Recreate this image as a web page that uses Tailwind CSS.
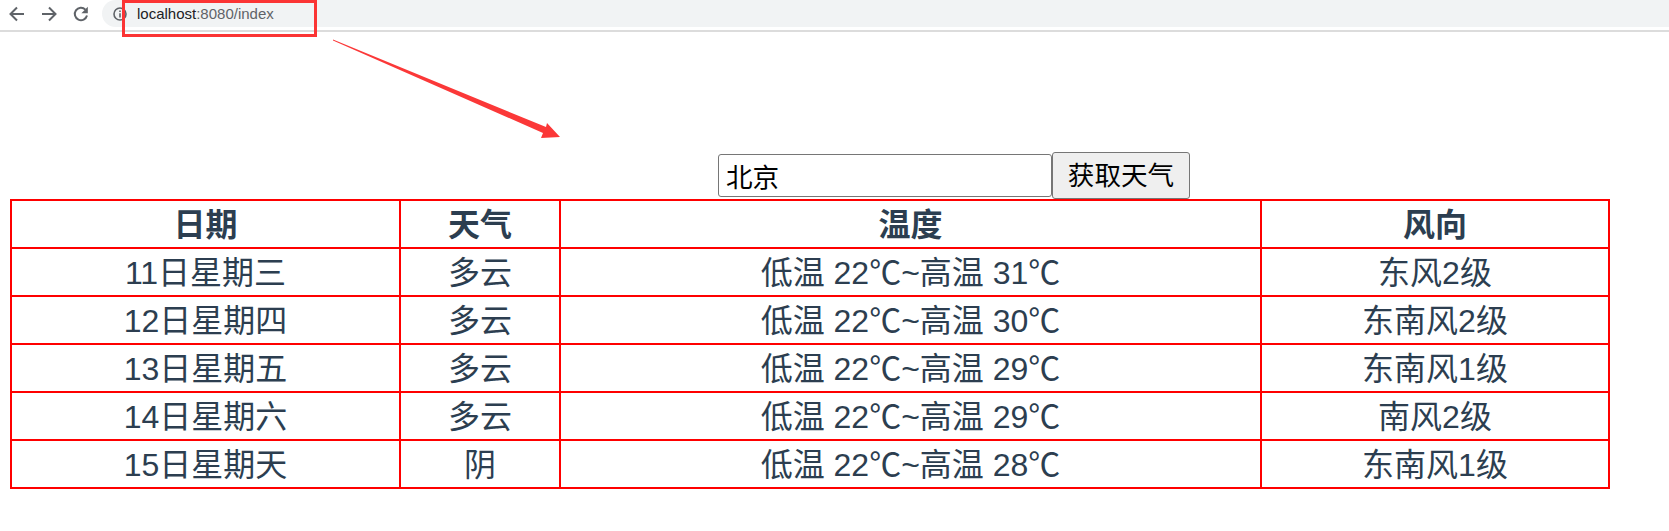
<!DOCTYPE html>
<html lang="zh-CN">
<head>
  <meta charset="UTF-8">
  <meta name="viewport" content="width=device-width, initial-scale=1.0">
  <title>天气</title>
  <script src="https://cdn.jsdelivr.net/npm/@tailwindcss/browser@4"></script>
</head>
<body class="relative h-[531px] w-[1669px] overflow-hidden bg-white font-['Liberation_Sans','Noto_Sans_CJK_SC',sans-serif]">
  <!-- browser toolbar -->
  <div class="flex h-[32px] items-start border-b-2 border-[#dcdcdc] bg-white">
    <div class="flex h-[27px] items-center gap-[14px] pl-[8px]">
      <svg class="w-[18px] h-[18px]" viewBox="0 0 18 18" fill="none" stroke="#5f6368" stroke-width="2"><path d="M16 9H3M9 2.5 2.5 9 9 15.5"/></svg>
      <svg class="w-[18px] h-[18px]" viewBox="0 0 18 18" fill="none" stroke="#5f6368" stroke-width="2"><path d="M2 9h13M9 2.5 15.5 9 9 15.5"/></svg>
      <svg class="w-[18px] h-[18px]" viewBox="0 0 18 18" fill="none" stroke="#5f6368" stroke-width="2"><path d="M15 10.5A6.2 6.2 0 1 1 13.4 4.6"/><path d="M15.8 1.8v6.4H9.4" fill="#5f6368" stroke="none"/></svg>
    </div>
    <div class="ml-[12px] flex h-[27px] flex-1 items-center rounded-l-full bg-[#f1f3f4] pl-[11px]">
      <svg class="w-[14px] h-[14px]" viewBox="0 0 14 14" fill="none" stroke="#5f6368" stroke-width="1.6"><circle cx="7" cy="7" r="6"/><path d="M7 6.2v4.2M7 3.4v1.6"/></svg>
      <span class="ml-[10px] text-[15px] leading-none text-[#202124]">localhost<span class="text-[#5f6368]">:8080/index</span></span>
    </div>
  </div>

  <!-- screenshot annotations -->
  <div class="absolute left-[122px] top-0 h-[37px] w-[195px] border-[3px] border-[#fb3434]"></div>
  <svg class="absolute left-0 top-0 w-[1669px] h-[200px] pointer-events-none" viewBox="0 0 1669 200">
    <polygon fill="#fb3838" points="333,39.5 546,127 547,123 560,137 541,138 543,133 333,40.5"/>
  </svg>

  <!-- search -->
  <div class="mt-[120px] flex h-[47px] items-center pl-[718px]">
    <input type="text" value="北京" class="h-[43px] w-[334px] rounded-[3px] border border-[#767676] bg-white px-[7px] text-[26.6px] text-black">
    <button class="h-[47px] w-[138px] whitespace-nowrap rounded-[3px] border border-[#767676] bg-[#efefef] pt-[3px] text-[26.6px] text-black">获取天气</button>
  </div>

  <!-- forecast -->
  <table class="ml-[10px] w-[1598px] table-fixed border-collapse text-center text-[32px] leading-[44px] text-[#2c3e50]">
    <colgroup>
      <col class="w-[389px]">
      <col class="w-[160px]">
      <col class="w-[701px]">
      <col class="w-[348px]">
    </colgroup>
    <thead>
      <tr class="h-[48px]">
        <th class="border-2 border-[#ff0000] p-0 pt-[2px] font-bold">日期</th>
        <th class="border-2 border-[#ff0000] p-0 pt-[2px] font-bold">天气</th>
        <th class="border-2 border-[#ff0000] p-0 pt-[2px] font-bold">温度</th>
        <th class="border-2 border-[#ff0000] p-0 pt-[2px] font-bold">风向</th>
      </tr>
    </thead>
    <tbody>
      <tr class="h-[48px]">
        <td class="border-2 border-[#ff0000] p-0 pt-[2px]">11日星期三</td>
        <td class="border-2 border-[#ff0000] p-0 pt-[2px]">多云</td>
        <td class="border-2 border-[#ff0000] p-0 pt-[2px]">低温 22℃~高温 31℃</td>
        <td class="border-2 border-[#ff0000] p-0 pt-[2px]">东风2级</td>
      </tr>
      <tr class="h-[48px]">
        <td class="border-2 border-[#ff0000] p-0 pt-[2px]">12日星期四</td>
        <td class="border-2 border-[#ff0000] p-0 pt-[2px]">多云</td>
        <td class="border-2 border-[#ff0000] p-0 pt-[2px]">低温 22℃~高温 30℃</td>
        <td class="border-2 border-[#ff0000] p-0 pt-[2px]">东南风2级</td>
      </tr>
      <tr class="h-[48px]">
        <td class="border-2 border-[#ff0000] p-0 pt-[2px]">13日星期五</td>
        <td class="border-2 border-[#ff0000] p-0 pt-[2px]">多云</td>
        <td class="border-2 border-[#ff0000] p-0 pt-[2px]">低温 22℃~高温 29℃</td>
        <td class="border-2 border-[#ff0000] p-0 pt-[2px]">东南风1级</td>
      </tr>
      <tr class="h-[48px]">
        <td class="border-2 border-[#ff0000] p-0 pt-[2px]">14日星期六</td>
        <td class="border-2 border-[#ff0000] p-0 pt-[2px]">多云</td>
        <td class="border-2 border-[#ff0000] p-0 pt-[2px]">低温 22℃~高温 29℃</td>
        <td class="border-2 border-[#ff0000] p-0 pt-[2px]">南风2级</td>
      </tr>
      <tr class="h-[48px]">
        <td class="border-2 border-[#ff0000] p-0 pt-[2px]">15日星期天</td>
        <td class="border-2 border-[#ff0000] p-0 pt-[2px]">阴</td>
        <td class="border-2 border-[#ff0000] p-0 pt-[2px]">低温 22℃~高温 28℃</td>
        <td class="border-2 border-[#ff0000] p-0 pt-[2px]">东南风1级</td>
      </tr>
    </tbody>
  </table>
</body>
</html>
